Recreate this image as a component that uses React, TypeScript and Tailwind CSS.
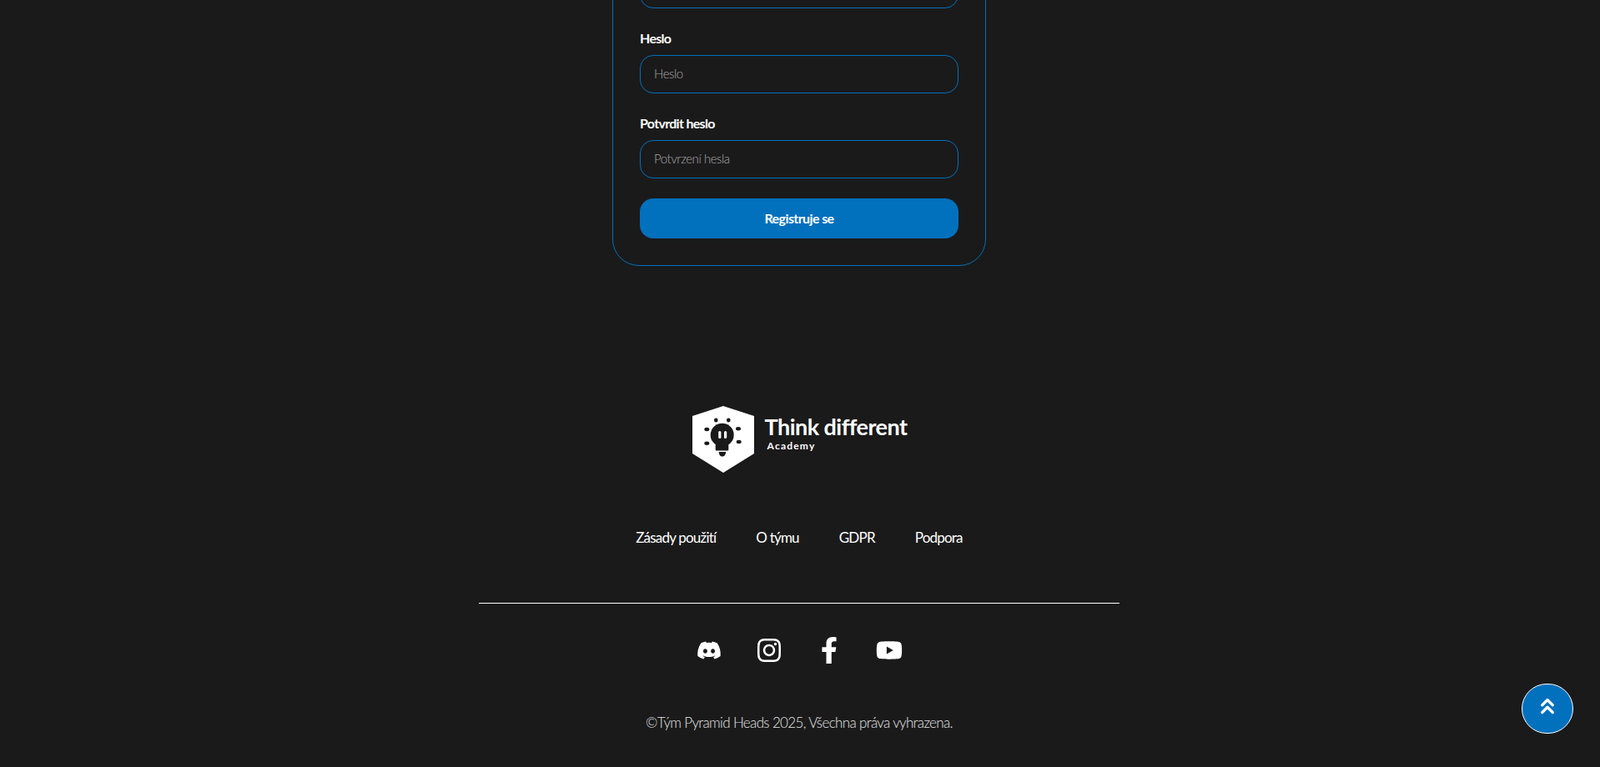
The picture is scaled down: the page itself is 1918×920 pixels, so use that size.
import { ChevronsUp } from "lucide-react"
import { FaDiscord, FaFacebookF, FaInstagram, FaYoutube } from "react-icons/fa"

function Field({ label, placeholder }: { label: string; placeholder: string }) {
  return (
    <div className="mb-6">
      <label className="mb-2 block h-6 text-[16px] leading-6 font-bold tracking-[-0.7px] text-white">
        {label}
      </label>
      <input
        type="password"
        placeholder={placeholder}
        className="h-[46px] w-full rounded-2xl border border-[#0270bd] bg-transparent px-4 pb-0.5 text-[15px] font-light tracking-[-0.45px] text-white outline-none placeholder:text-[#a8a8a8]"
      />
    </div>
  )
}

function Logo() {
  return (
    <div className="ml-[1px] flex items-start">
      <svg width="74" height="80" viewBox="0 0 74 80" className="shrink-0">
        <polygon points="37,0 74,12 74,57 37,80 0,57 0,12" fill="#fff" />
        <circle cx="35.7" cy="34.7" r="14" fill="#1a1a1a" />
        <rect x="27.7" y="46" width="15.6" height="7.5" rx="1" fill="#1a1a1a" />
        <path d="M31.7 55h8.4c0 3.5-1.8 5.6-4.2 5.6s-4.2-2.1-4.2-5.6z" fill="#1a1a1a" />
        <rect x="31.2" y="30" width="3.2" height="9" rx="1.6" fill="#fff" />
        <rect x="38" y="30" width="3.2" height="9" rx="1.6" fill="#fff" />
        <ellipse cx="28.3" cy="17" rx="2.3" ry="2.6" fill="#1a1a1a" />
        <ellipse cx="43.3" cy="17" rx="2.3" ry="2.6" fill="#1a1a1a" />
        <ellipse cx="17.3" cy="28" rx="3" ry="2.2" fill="#1a1a1a" />
        <ellipse cx="55" cy="27.3" rx="3" ry="2.2" fill="#1a1a1a" />
        <ellipse cx="17.3" cy="44.7" rx="3" ry="2.2" fill="#1a1a1a" />
        <ellipse cx="55.7" cy="43" rx="3" ry="2.2" fill="#1a1a1a" />
      </svg>
      <div className="ml-[13px] pt-[8px] text-white">
        <div className="text-[27px] leading-[33px] font-bold tracking-[-0.55px] whitespace-nowrap">
          Think different
        </div>
        <div className="ml-[3px] text-[12px] leading-[14px] font-bold tracking-[1.2px]">Academy</div>
      </div>
    </div>
  )
}

export default function App() {
  return (
    <div className="relative flex h-[920px] flex-col items-center justify-end overflow-hidden bg-[#1a1a1a] pr-[2px] pb-[39px] font-['Lato',sans-serif]">
      <form className="mb-[168px] w-[448px] shrink-0 rounded-[32px] border border-[#0270bd] px-8 pt-8 pb-8">
        <Field label="Email" placeholder="Email" />
        <Field label="Heslo" placeholder="Heslo" />
        <Field label="Potvrdit heslo" placeholder="Potvrzení hesla" />
        <button
          type="button"
          className="h-12 w-full rounded-2xl bg-[#0170bd] text-[16px] font-bold tracking-[-0.6px] text-white"
        >
          Registruje se
        </button>
      </form>

      <footer className="flex w-[768px] shrink-0 flex-col items-center">
        <Logo />
        <nav className="mt-[64px] flex h-[28px] items-center gap-12 text-[17px] tracking-[-0.8px] text-white">
          <a href="#">Zásady použití</a>
          <a href="#">O týmu</a>
          <a href="#">GDPR</a>
          <a href="#">Podpora</a>
        </nav>
        <hr className="mt-[64px] w-full border-t border-white" />
        <div className="mt-[38px] flex h-[36px] items-center gap-10 text-white">
          <span className="flex w-8 justify-center"><FaDiscord size={30} /></span>
          <span className="flex w-8 justify-center"><FaInstagram size={32} /></span>
          <span className="flex w-8 justify-center"><FaFacebookF size={32} /></span>
          <span className="flex w-8 justify-center"><FaYoutube size={32} /></span>
        </div>
        <p className="mt-[55px] text-[17px] leading-[28px] font-light tracking-[-0.65px] text-[#e4e4e4]">
          ©Tým Pyramid Heads 2025, Všechna práva vyhrazena.
        </p>
      </footer>

      <button
        type="button"
        className="absolute right-[32px] bottom-[40px] flex h-[60px] w-[62px] items-center justify-center rounded-full border border-white bg-[#0170bd] text-white"
      >
        <ChevronsUp size={30} strokeWidth={2.6} className="mb-1.5" />
      </button>
    </div>
  )
}
